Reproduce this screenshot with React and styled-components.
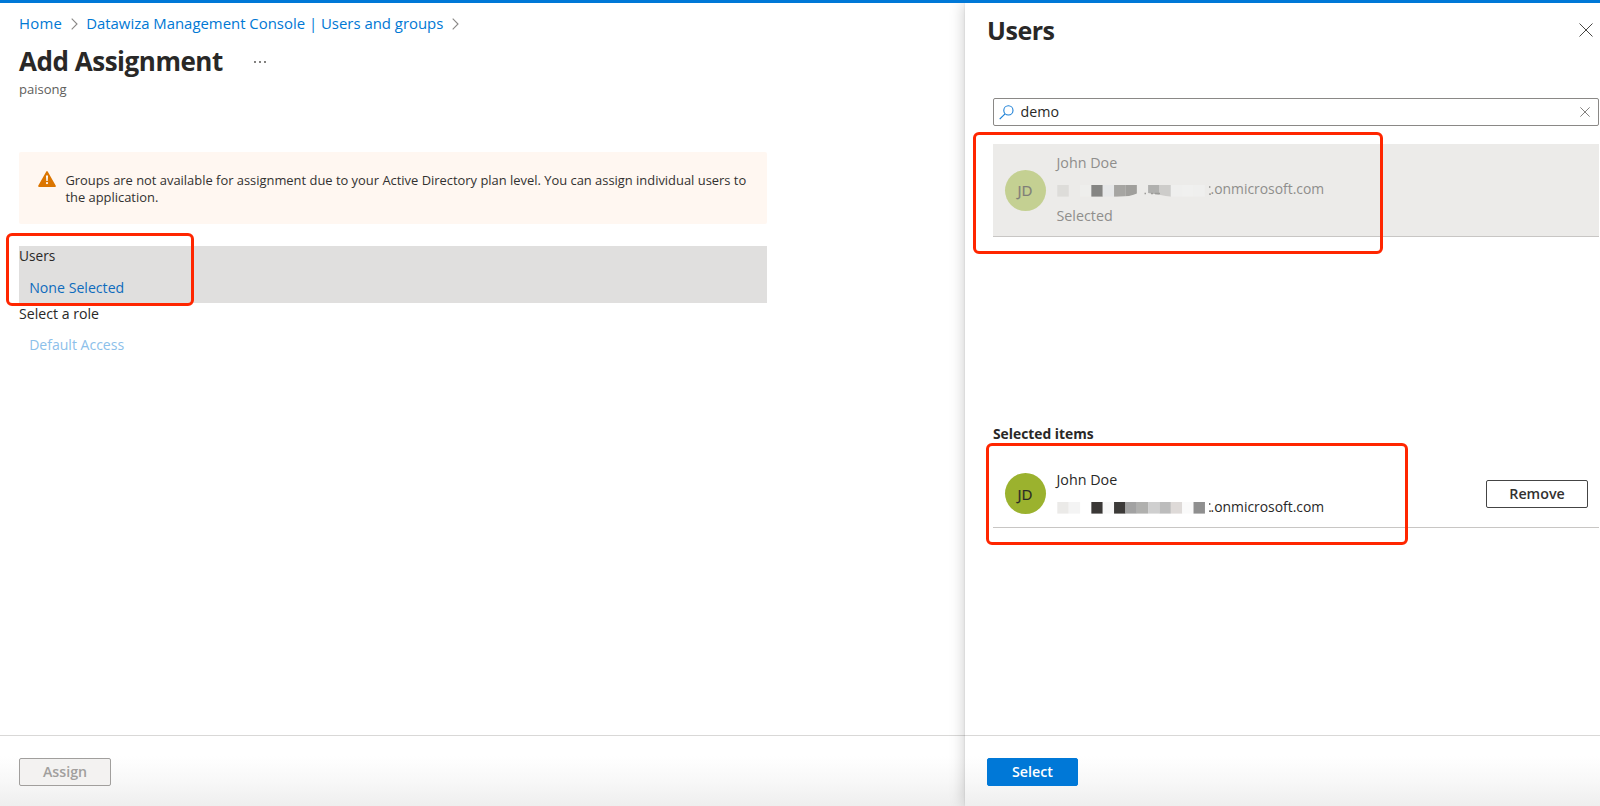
import React from 'react';
import styled, { createGlobalStyle } from 'styled-components';

const GlobalStyle = createGlobalStyle`
  * {
    box-sizing: border-box;
  }

  body {
    margin: 0;
    overflow: hidden;
    background: #fff;
    color: #323130;
    font-family: 'Open Sans', 'Noto Sans', sans-serif;
    font-size: 14px;
    line-height: 20px;
  }

  button, input {
    font-family: inherit;
  }
`;

const Portal = styled.div`
  position: relative;
  display: flex;
  width: 1600px;
  height: 806px;
  border-top: 3px solid #0078d7;
  background: #fff;
  overflow: hidden;
`;

const Blade = styled.main`
  display: flex;
  flex-direction: column;
  width: 964.5px;
  flex-shrink: 0;
`;

const BladeHeader = styled.header`
  padding: 10px 19px 0;
`;

const Breadcrumb = styled.nav`
  display: flex;
  align-items: center;
  height: 20px;
  color: #0078d4;
  font-size: 14.92px;
`;

const Crumb = styled.a`
  color: inherit;
  text-decoration: none;
  white-space: nowrap;
  letter-spacing: ${({ $spacing }) => $spacing || 'normal'};
`;

const Chevron = styled.svg`
  width: 7px;
  height: 12px;
  margin: 2px 8.5px 0;
  flex-shrink: 0;
`;

const TitleRow = styled.div`
  display: flex;
  align-items: center;
  margin-top: 11px;
`;

const Title = styled.h1`
  margin: 0;
  color: #292827;
  font-size: ${({ $size }) => $size};
  font-weight: 700;
  line-height: 34px;
  letter-spacing: -0.47px;
  white-space: nowrap;
`;

const MoreIcon = styled.svg`
  width: 14px;
  height: 4px;
  margin: 1px 0 0 30px;
`;

const Subtitle = styled.div`
  margin-top: 2px;
  color: #605e5c;
  font-size: 13.05px;
  line-height: 18px;
`;

const BladeBody = styled.section`
  width: 747.5px;
  margin: 54px 0 0 19px;
`;

const Warning = styled.div`
  display: flex;
  height: 71.5px;
  padding: 20px 0 0 19.5px;
  border-radius: 2px;
  background: #fff7f1;
  font-size: 12.91px;
  line-height: 17px;
`;

const WarningIcon = styled.svg`
  width: 18px;
  height: 16px;
  margin: -1px 9px 0 -0.5px;
  flex-shrink: 0;
`;

const WarningText = styled.div`
  padding-left: 0.4px;
  white-space: nowrap;
`;

const Fields = styled.div`
  margin-top: 22px;
`;

const Field = styled.div`
  height: 57.5px;
  background: ${({ $active }) => ($active ? '#e0dfde' : 'transparent')};
`;

const FieldLabel = styled.div`
  padding-top: ${({ $drop }) => $drop || '0.5px'};
  font-size: ${({ $size }) => $size || '14.15px'};
  color: #292827;
  height: 20px;
`;

const FieldLink = styled.a`
  display: block;
  margin: 12px 0 0 10.2px;
  color: ${({ $disabled }) => ($disabled ? '#8cc0ea' : '#0f6cbd')};
  font-size: ${({ $disabled }) => ($disabled ? '14.04px' : '14.15px')};
`;

const Footer = styled.footer`
  height: 71px;
  margin-top: auto;
  padding: 22px 0 0 ${({ $inset }) => $inset};
  border-top: 1px solid #d9d8d7;
  background: linear-gradient(to bottom, #fff 20px, #f9f9f9 42px, #eee 71px);
`;

const Button = styled.button`
  display: flex;
  align-items: center;
  justify-content: center;
  width: ${({ $width }) => $width || '92px'};
  height: 28px;
  padding: 0;
  border: 1px solid #444;
  border-radius: 2px;
  background: #fff;
  color: #323130;
  font-size: 14.25px;
  font-weight: 600;
  line-height: 20px;

  ${({ $variant }) => $variant === 'primary' && `
    border-color: #0078d7;
    background: #0078d7;
    color: #fff;
  `}

  ${({ $variant }) => $variant === 'disabled' && `
    border-color: #a19f9d;
    background: #f3f2f1;
    color: #a19f9d;
  `}
`;

const Panel = styled.aside`
  position: relative;
  display: flex;
  flex-direction: column;
  flex: 1;
  background: #fff;
  box-shadow: -1px 0 14px rgba(0, 0, 0, 0.2), 0 0 2px rgba(0, 0, 0, 0.1);
`;

const PanelHeader = styled.div`
  display: flex;
  align-items: center;
  justify-content: space-between;
  height: 43px;
  padding: 10px 7px 0 22.5px;
`;

const CloseIcon = styled.svg`
  width: ${({ $size }) => $size}px;
  height: ${({ $size }) => $size}px;
`;

const PanelBody = styled.div`
  display: flex;
  flex-direction: column;
  padding: 52px 1px 0 28.5px;
`;

const SearchBox = styled.div`
  display: flex;
  align-items: center;
  height: 28px;
  padding: 0 8px 0 5.5px;
  border: 1px solid #8a8886;
  border-radius: 2px;
`;

const SearchInput = styled.input`
  flex: 1;
  min-width: 0;
  height: 24px;
  padding: 0 0 1px;
  margin-left: 6.5px;
  border: 0;
  outline: 0;
  background: transparent;
  color: #292827;
  font-size: 14.24px;
`;

const SearchIcon = styled.svg`
  width: 15px;
  height: 15px;
  margin-left: -0.5px;
  flex-shrink: 0;
`;

const UserRow = styled.div`
  display: flex;
  align-items: center;
  height: ${({ $height }) => $height};
  padding: 0 11px 0 11.5px;
  border-bottom: 1px solid #c8c6c4;
  background: ${({ $muted }) => ($muted ? '#ecebe9' : 'transparent')};
  color: ${({ $muted }) => ($muted ? '#8f8e8c' : '#292827')};
`;

const ResultRow = styled(UserRow)`
  margin-top: 18px;
`;

const Avatar = styled.div`
  display: flex;
  align-items: center;
  justify-content: center;
  width: 41px;
  height: 41px;
  border-radius: 50%;
  background: ${({ $muted }) => ($muted ? '#c4d092' : '#9bb22e')};
  color: ${({ $muted }) => ($muted ? '#7f7e78' : '#292827')};
  font-size: 15.1px;
  -webkit-text-stroke: 0.2px currentColor;
  flex-shrink: 0;
`;

const UserInfo = styled.div`
  flex: 1;
  margin-left: 11px;
  font-size: 14.3px;
  line-height: 26.5px;
`;

const AccountName = styled.div`
  display: flex;
  align-items: center;
  height: 26.5px;
  font-size: 13.9px;
`;

const Domain = styled.span`
  margin-bottom: ${({ $lift }) => $lift || 0};
`;

const Redaction = styled.svg`
  width: 154px;
  height: 12px;
  margin-top: ${({ $shift }) => $shift};
`;

const SelectedHeading = styled.h2`
  margin: 187px 0 0;
  color: #292827;
  font-size: 13.84px;
  font-weight: 700;
  line-height: 20px;
`;

const SelectedRow = styled(UserRow)`
  margin-top: 16px;
`;

const Highlight = styled.div`
  position: absolute;
  left: ${({ $box }) => $box[0]}px;
  top: ${({ $box }) => $box[1] - 3}px;
  width: ${({ $box }) => $box[2]}px;
  height: ${({ $box }) => $box[3]}px;
  border: 3px solid #ff2600;
  border-radius: 6px;
  pointer-events: none;
`;

const CELL = 11.35;

const resultCells = ['#dddcd9', null, '#eeeeec', '#858583', '#e6e7e8', '#a6a5a2', '#a09f9c', null, '#b0b0ae', '#cdccca', '#efefee', '#f0f0ef', '#efefee'];
const selectedCells = ['#ebeae8', '#f4f4f4', null, '#3a3836', '#f8f8f8', '#3c3a38', '#a2a2a2', '#b0b0ae', '#cfcfcf', '#bcbcbc', '#dedad8', '#fafafa', '#8f8f8f'];

function Mosaic({ cells, shift, torn, ink }) {
  return (
    <Redaction viewBox="0 0 154 12" $shift={shift} aria-hidden="true">
      {cells.map((fill, i) => fill && (
        <rect key={i} x={i * CELL + 0.3} y="0" width={CELL + 0.1} height="11.6" fill={fill} />
      ))}
      {torn && (
        <>
          <path d="M60 12 Q74 11.5 80 8.5 L80 12 Z M91 8 Q102 9.5 114 12 L91 12 Z" fill="#ecebe9" />
          <path d="M87.5 8.5h1.5M94 8.5h2M98 8.5h5" stroke="#9c9b99" strokeWidth="1.3" />
        </>
      )}
      <path d="M152 2h1.4M152 9.2h2" stroke={ink} strokeWidth="1.3" />
    </Redaction>
  );
}

function Cross({ size, color, width = 1 }) {
  return (
    <CloseIcon $size={size} viewBox="0 0 14 14" aria-hidden="true">
      <path d="M0.5 0.5 13.5 13.5M13.5 0.5 0.5 13.5" stroke={color} strokeWidth={width} fill="none" />
    </CloseIcon>
  );
}

function CrumbSeparator() {
  return (
    <Chevron viewBox="0 0 7 12" aria-hidden="true">
      <path d="M0.7 0.7 6 6 0.7 11.3" stroke="#8a8886" strokeWidth="1.1" fill="none" />
    </Chevron>
  );
}

export default function App() {
  return (
    <>
      <GlobalStyle />
      <Portal>
        <Blade>
          <BladeHeader>
            <Breadcrumb>
              <Crumb $spacing="0.25px">Home</Crumb>
              <CrumbSeparator />
              <Crumb>Datawiza Management Console | Users and groups</Crumb>
              <CrumbSeparator />
            </Breadcrumb>
            <TitleRow>
              <Title $size="26px">Add Assignment</Title>
              <MoreIcon viewBox="0 0 14 4">
                <g fill="#484644">
                  <circle cx="2" cy="2" r="0.9" />
                  <circle cx="7" cy="2" r="0.9" />
                  <circle cx="12" cy="2" r="0.9" />
                </g>
              </MoreIcon>
            </TitleRow>
            <Subtitle>paisong</Subtitle>
          </BladeHeader>

          <BladeBody>
            <Warning>
              <WarningIcon viewBox="0 0 18 16">
                <path d="M9 0.9 17.1 15.1H0.9Z" fill="#db7500" stroke="#db7500" strokeWidth="1.6" strokeLinejoin="round" />
                <path d="M8 4.6h2l-.3 5.4H8.3Z" fill="#fff" />
                <circle cx="9" cy="12.1" r="1.1" fill="#fff" />
              </WarningIcon>
              <WarningText>
                Groups are not available for assignment due to your Active Directory plan level. You can assign individual users to
                <br />
                the application.
              </WarningText>
            </Warning>

            <Fields>
              <Field $active>
                <FieldLabel $size="13.7px" $drop="0.5px">Users</FieldLabel>
                <FieldLink>None Selected</FieldLink>
              </Field>
              <Field>
                <FieldLabel>Select a role</FieldLabel>
                <FieldLink $disabled>Default Access</FieldLink>
              </Field>
            </Fields>
          </BladeBody>

          <Footer $inset="19px">
            <Button $variant="disabled" disabled>Assign</Button>
          </Footer>
        </Blade>

        <Panel>
          <PanelHeader>
            <Title as="h2" $size="25px">Users</Title>
            <Cross size={14} color="#484644" />
          </PanelHeader>

          <PanelBody>
            <SearchBox>
              <SearchIcon viewBox="0 0 15 15">
                <circle cx="9.4" cy="5.4" r="4.6" stroke="#1a7fd6" strokeWidth="1.1" fill="none" />
                <path d="M6 8.8 0.7 14.2" stroke="#1a7fd6" strokeWidth="1.2" />
              </SearchIcon>
              <SearchInput defaultValue="demo" />
              <Cross size={10} color="#797775" width={1.3} />
            </SearchBox>

            <ResultRow $height="93px" $muted>
              <Avatar $muted>JD</Avatar>
              <UserInfo>
                <div>John Doe</div>
                <AccountName>
                  <Mosaic cells={resultCells} shift="2px" torn ink="#8f8e8c" />
                  <Domain $lift="2px">.onmicrosoft.com</Domain>
                </AccountName>
                <div>Selected</div>
              </UserInfo>
            </ResultRow>

            <SelectedHeading>Selected items</SelectedHeading>
            <SelectedRow $height="68px">
              <Avatar>JD</Avatar>
              <UserInfo>
                <div>John Doe</div>
                <AccountName>
                  <Mosaic cells={selectedCells} shift="3px" ink="#444" />
                  <Domain>.onmicrosoft.com</Domain>
                </AccountName>
              </UserInfo>
              <Button $width="102px">Remove</Button>
            </SelectedRow>
          </PanelBody>

          <Footer $inset="22.5px">
            <Button $variant="primary" $width="91px">Select</Button>
          </Footer>
        </Panel>

        <Highlight $box={[6, 233, 188, 73]} />
        <Highlight $box={[972.5, 132, 410, 122]} />
        <Highlight $box={[986, 443, 422, 102]} />
      </Portal>
    </>
  );
}
